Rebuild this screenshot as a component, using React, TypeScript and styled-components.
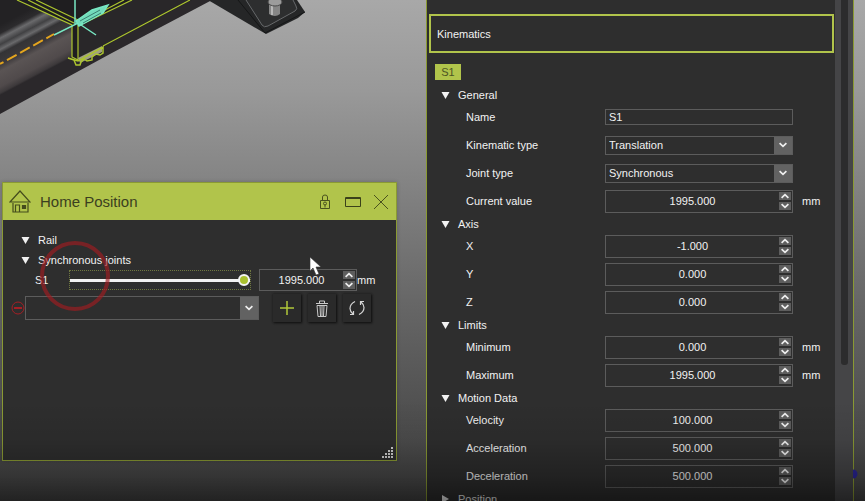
import React from "react";
import styled, { createGlobalStyle, css } from "styled-components";

const lime = "#b1c44b";
const edge = "#8a9a33";
const surface = "#2e2e2e";

const GlobalStyle = createGlobalStyle`
  * { box-sizing: border-box; }
  body { margin: 0; overflow: hidden; background: #222; }
  body, button, input, select { font-family: "Liberation Sans", Arial, sans-serif; font-size: 11px; }
  button, input, select { margin: 0; padding: 0; border: 0; color: inherit; border-radius: 0; }
`;

const Screen = styled.div`
  position: relative;
  display: flex;
  height: 100vh;
  overflow: hidden;
  color: #f2f2f2;
  line-height: 16px;
  background: linear-gradient(#a8a8a8 0%, #999 18%, #858585 35%, #676767 60%, #505050 82%, #454545 100%);
`;

const Shade = styled.div`
  position: absolute;
  inset: auto 0 0 0;
  height: 100px;
  pointer-events: none;
  background: linear-gradient(transparent, rgba(0, 0, 0, 0.08) 40%, rgba(0, 0, 0, 0.27) 75%, rgba(0, 0, 0, 0.5));
`;

const Viewport = styled.main`
  position: relative;
  flex: 1;
  min-width: 0;
`;

const Model = styled.svg`
  display: block;
`;

const Marker = styled.svg`
  position: absolute;
  right: 4px;
  bottom: 22px;
`;

const Floating = styled.section`
  position: absolute;
  left: 2px;
  top: 182px;
  width: 395px;
  min-height: 279px;
  display: flex;
  flex-direction: column;
  background: ${surface};
  border: 1px solid ${edge};
  box-shadow: 0 0 4px rgba(0, 0, 0, 0.2);
`;

const TitleBar = styled.header`
  display: flex;
  align-items: center;
  height: 37px;
  padding: 0 5px 0 6px;
  background: ${lime};
  color: #3b3f20;
`;

const Title = styled.h1`
  flex: 1;
  margin: 0 0 0 9px;
  font-size: 15px;
  line-height: 20px;
  font-weight: 400;
`;

const TitleActions = styled.div`
  display: flex;
  align-items: center;
  gap: 8px;
`;

const IconButton = styled.button`
  display: grid;
  place-items: center;
  width: 20px;
  height: 20px;
  background: none;
`;

const WindowBody = styled.div`
  flex: 1;
  padding: 10px 0 0 14px;
`;

const TreeRow = styled.div<{ $height: number }>`
  display: flex;
  align-items: center;
  height: ${(p) => p.$height}px;
`;

const Toggle = styled.button`
  display: flex;
  align-items: center;
  gap: 8px;
  padding: 0 4px;
  background: none;
`;

const JointRow = styled.div`
  display: flex;
  align-items: center;
  height: 20px;
  padding-left: 18px;
`;

const JointName = styled.label`
  width: 34px;
`;

const Slider = styled.input`
  appearance: none;
  width: 182px;
  height: 20px;
  margin: 0 8px 0 0;
  background: linear-gradient(#f2f2f2, #f2f2f2) center / 100% 3px no-repeat;
  border: 1px dotted #6f7740;
  outline: none;
  &::-webkit-slider-thumb {
    appearance: none;
    width: 12px;
    height: 12px;
    border-radius: 50%;
    border: 2px solid #f4f4f4;
    background: #a9c02f;
  }
`;

const AddRow = styled.div`
  display: flex;
  align-items: center;
  height: 32px;
  margin: 2px 0 0 -6px;
`;

const RemoveButton = styled(IconButton)`
  width: 14px;
  height: 14px;
`;

const Tools = styled.div`
  display: flex;
  gap: 7px;
  margin-left: 14px;
`;

const ToolButton = styled.button`
  display: grid;
  place-items: center;
  width: 28px;
  height: 28px;
  background: #2a2a2a;
  box-shadow: 1px 1px 2px #111, 0 0 2px #1a1a1a;
`;

const Frame = styled.div<{ $width: number; $height: number }>`
  position: relative;
  display: flex;
  align-items: center;
  flex: none;
  width: ${(p) => p.$width}px;
  height: ${(p) => p.$height}px;
  border: 1px solid #5c5c5c;
`;

const fieldText = css`
  flex: 1;
  min-width: 0;
  width: 100%;
  background: none;
  outline: none;
`;

const NumberInput = styled.input`
  ${fieldText}
  text-align: center;
`;

const TextInput = styled.input`
  ${fieldText}
  padding-left: 3px;
`;

const Choice = styled.select`
  ${fieldText}
  appearance: none;
  align-self: stretch;
  padding-left: 3px;
`;

const DropMark = styled.span`
  display: grid;
  place-items: center;
  align-self: stretch;
  width: 18px;
  background: #626262;
  pointer-events: none;
`;

const Steppers = styled.div`
  display: grid;
  gap: 2px;
  margin-right: 1px;
`;

const Step = styled.button`
  display: grid;
  place-items: center;
  width: 12px;
  height: 8px;
  background: #5e5e5e;
`;

const Unit = styled.span<{ $gap: number }>`
  margin-left: ${(p) => p.$gap}px;
`;

const Grip = styled.svg`
  align-self: flex-end;
  margin: 0 3px 2px 0;
`;

const Inspector = styled.aside`
  display: flex;
  width: 428px;
  height: 100%;
  margin-right: 11px;
  background: ${surface};
  border: solid ${edge};
  border-width: 0 1px;
`;

const InspectorBody = styled.div`
  flex: 1;
  min-width: 0;
  overflow: hidden;
  padding: 14px 1px 0 2px;
`;

const Scroll = styled.div`
  width: 18px;
  padding: 0 5px 0 6px;
  background: #454547;
`;

const Thumb = styled.div`
  width: 7px;
  height: 365px;
  background: #2c2c2d;
  border-radius: 0 0 3px 3px;
`;

const SectionTitle = styled.h2`
  display: flex;
  align-items: center;
  height: 39px;
  margin: 0;
  padding-left: 6px;
  border: 2px solid ${lime};
  font-size: 11px;
  font-weight: 400;
`;

const Tag = styled.button`
  display: block;
  width: 26px;
  height: 16px;
  margin: 11px 0 6px 6px;
  background: ${lime};
  color: #4d5524;
`;

const Group = styled.section`
  padding-left: 8px;
`;

const FieldRow = styled.div`
  display: flex;
  align-items: center;
  height: 28px;
  padding-left: 29px;
`;

const FieldLabel = styled.label`
  width: 139px;
`;

const Caret = ({ open = true }: { open?: boolean }) => (
  <svg width="9" height="8" viewBox="0 0 9 8" fill="#f2f2f2" aria-hidden="true">
    <path d={open ? "M.5 1h8L4.500 8z" : "M1 0v8l7-4z"} />
  </svg>
);

const Chevron = ({ up = false }: { up?: boolean }) => (
  <svg width="8" height="6" viewBox="0 0 8 6" fill="none" stroke="#efefef" strokeWidth="1.7" aria-hidden="true">
    <path d={up ? "M.6 4.800 4 1.600l3.400 3.200" : "M.6 1.200 4 4.400l3.400-3.200"} />
  </svg>
);

function NumberField({ id, value, width = 188, height = 23 }: { id: string; value: string; width?: number; height?: number }) {
  return (
    <Frame $width={width} $height={height}>
      <NumberInput id={id} aria-label={id} defaultValue={value} inputMode="decimal" />
      <Steppers>
        <Step aria-label="Increase"><Chevron up /></Step>
        <Step aria-label="Decrease"><Chevron /></Step>
      </Steppers>
    </Frame>
  );
}

function SelectField({ id, value, width, height, label }: { id: string; value: string; width: number; height: number; label?: string }) {
  return (
    <Frame $width={width} $height={height}>
      <Choice id={id} aria-label={label} defaultValue={value}>
        <option>{value}</option>
      </Choice>
      <DropMark><Chevron /></DropMark>
    </Frame>
  );
}

type Field = { label: string; value: string; kind?: "text" | "select"; unit?: string };

const groups: { name: string; fields: Field[] }[] = [
  {
    name: "General",
    fields: [
      { label: "Name", value: "S1", kind: "text" },
      { label: "Kinematic type", value: "Translation", kind: "select" },
      { label: "Joint type", value: "Synchronous", kind: "select" },
      { label: "Current value", value: "1995.000", unit: "mm" },
    ],
  },
  {
    name: "Axis",
    fields: [
      { label: "X", value: "-1.000" },
      { label: "Y", value: "0.000" },
      { label: "Z", value: "0.000" },
    ],
  },
  {
    name: "Limits",
    fields: [
      { label: "Minimum", value: "0.000", unit: "mm" },
      { label: "Maximum", value: "1995.000", unit: "mm" },
    ],
  },
  {
    name: "Motion Data",
    fields: [
      { label: "Velocity", value: "100.000" },
      { label: "Acceleration", value: "500.000" },
      { label: "Deceleration", value: "500.000" },
    ],
  },
  { name: "Position", fields: [] },
];

function PropertyRow({ field }: { field: Field }) {
  const id = field.label.toLowerCase().replace(" ", "-");
  return (
    <FieldRow>
      <FieldLabel htmlFor={id}>{field.label}</FieldLabel>
      {field.kind === "text" ? (
        <Frame $width={188} $height={16}><TextInput id={id} defaultValue={field.value} /></Frame>
      ) : field.kind === "select" ? (
        <SelectField id={id} value={field.value} width={188} height={19} />
      ) : (
        <NumberField id={id} value={field.value} />
      )}
      {field.unit && <Unit $gap={9}>{field.unit}</Unit>}
    </FieldRow>
  );
}

const Scene = () => (
  <Model width="320" height="120" viewBox="0 0 320 120" role="img" aria-label="Rail model">
    <defs>
      <linearGradient id="rail" gradientUnits="userSpaceOnUse" x1="0" y1="25" x2="29" y2="80">
        <stop offset="0" stopColor="#232224" />
        <stop offset="0.12" stopColor="#2c2b2d" />
        <stop offset="0.19" stopColor="#6a6a6c" />
        <stop offset="0.23" stopColor="#58585a" />
        <stop offset="0.28" stopColor="#414143" />
        <stop offset="0.35" stopColor="#69696b" />
        <stop offset="0.41" stopColor="#343335" />
        <stop offset="0.56" stopColor="#3c393b" />
        <stop offset="0.66" stopColor="#5a5454" />
        <stop offset="0.88" stopColor="#504a4b" />
        <stop offset="0.97" stopColor="#3d393b" />
        <stop offset="1" stopColor="#2b282b" />
      </linearGradient>
    </defs>
    <path d="M0 0H212L110 54 0 114z" fill="#2b282b" />
    <path d="M0 0H35L73 24V57L0 96z" fill="url(#rail)" />
    <path d="M18 0H192L78 60 72 56V25z" fill="#1f1e20" />
    <path d="M78 27 130 0H190L78 59z" fill="#292729" />
    <g fill="none" stroke="#adc52f" strokeWidth="1.2">
      <path d="M17 0 72 25V57l6 3V25M36 0l42 20M28 0l46 23M78 26 132 0M80 23 124 0M103 46 190 0" />
    </g>
    <path d="M78 58 102 46v6L80 63z" fill="#a2a282" />
    <path d="M68 58l10 3 25-14v6l-3 2-4-1-4 3v3l-5 1-3-2-3 3-1 3h-4l-2-5-6-2" fill="none" stroke="#adc52f" strokeWidth="1.500" />
    <path d="M0 64 54 34" stroke="#e4a51e" strokeWidth="2" strokeDasharray="11 4" strokeDashoffset="7" />
    <g stroke="#78e8c3" strokeWidth="1.500" fill="none">
      <path d="M75 0v25M54 35l24-12 18 12" />
      <path d="M76 21 92 10l16-5-5 8-24 13z" fill="#73dcbb" />
      <path d="m80 21 20-11m-17 13 18-10" stroke="#397f70" strokeWidth="1" />
    </g>
    <path d="M208 0H297l8 12-7 6-32 16z" fill="#252627" />
    <path d="M246 0 262 25q2 3 6 1l27-15q3-2 1-5l-3-6" fill="#2d2e2f" stroke="#67696b" />
    <path d="M238 0 265 33l40-21" fill="none" stroke="#151617" />
    <path d="M269 0h11v14q-5 4-11 0z" fill="#868686" />
    <path d="M272 2v13" stroke="#b8b8b8" strokeWidth="2" />
    <ellipse cx="275" cy="2" rx="7" ry="4" fill="#9c9c9c" stroke="#4b4b4b" />
  </Model>
);

const HomeIcon = () => (
  <svg width="22" height="24" viewBox="0 0 22 24" fill="none" stroke="#454c1d" strokeWidth="1.2" aria-hidden="true">
    <path d="M1 12 11 1l10 11zM4 13v9h15v-9M6.500 22v-7h4v7M13.500 15.500h3v3h-3z" />
    <path d="M14.500 16.500h1v1h-1z" />
  </svg>
);

const TouchRing = styled.svg`
  position: absolute;
  left: 35px;
  top: 56px;
  pointer-events: none;
`;

const Pointer = styled.svg`
  position: absolute;
  left: 306px;
  top: 73px;
  pointer-events: none;
`;

export default function App() {
  return (
    <>
      <GlobalStyle />
      <Screen>
        <Marker width="8" height="10" viewBox="0 0 8 10" fill="#2a2596" aria-hidden="true">
          <circle cx="0" cy="5" r="4.500" />
        </Marker>
        <Viewport>
          <Scene />
          <Floating aria-label="Home Position">
            <TitleBar>
              <HomeIcon />
              <Title>Home Position</Title>
              <TitleActions>
                <IconButton aria-label="Lock">
                  <svg width="12" height="16" viewBox="0 0 12 16" fill="none" stroke="#4a521e">
                    <path d="M1.500 6.500h9v8h-9zM3.500 6V3q0-2 2.500-2t2.500 2v3M6 10.500v3" />
                    <circle cx="6" cy="9.500" r="1.500" />
                  </svg>
                </IconButton>
                <IconButton aria-label="Maximize">
                  <svg width="16" height="10" viewBox="0 0 16 10" fill="none" stroke="#3b421a">
                    <path d="M.5.5h15v9H.5zM0 1.500h16" />
                  </svg>
                </IconButton>
                <IconButton aria-label="Close">
                  <svg width="16" height="16" viewBox="0 0 16 16" fill="none" stroke="#4a521e">
                    <path d="m1 1 14 14M15 1 1 15" />
                  </svg>
                </IconButton>
              </TitleActions>
            </TitleBar>
            <WindowBody>
              <TreeRow $height={20}><Toggle><Caret />Rail</Toggle></TreeRow>
              <TreeRow $height={20}><Toggle><Caret />Synchronous joints</Toggle></TreeRow>
              <JointRow>
                <JointName htmlFor="s1-slider">S1</JointName>
                <Slider id="s1-slider" type="range" min={0} max={1995} defaultValue={1995} />
                <NumberField id="s1-value" value="1995.000" width={98} height={22} />
                <Unit $gap={0}>mm</Unit>
              </JointRow>
              <AddRow>
                <RemoveButton aria-label="Remove">
                  <svg width="14" height="14" viewBox="0 0 14 14" fill="none" stroke="#a51f25">
                    <circle cx="7" cy="7" r="6" />
                    <path d="M3 7h8" strokeWidth="2" />
                  </svg>
                </RemoveButton>
                <SelectField id="position" label="Saved position" value="" width={234} height={24} />
                <Tools>
                  <ToolButton aria-label="Add">
                    <svg width="16" height="16" viewBox="0 0 16 16" stroke="#b1c83a" strokeWidth="1.500"><path d="M8 1v14M1 8h14" /></svg>
                  </ToolButton>
                  <ToolButton aria-label="Delete">
                    <svg width="14" height="17" viewBox="0 0 14 17" fill="none" stroke="#c9c9c9">
                      <path d="M1 3.500h12M4.500 3V1h5v2M2 5.500h10l-1 11H3zM5 6l.5 10M7 6v10M9 6l-.5 10" />
                    </svg>
                  </ToolButton>
                  <ToolButton aria-label="Refresh">
                    <svg width="18" height="16" viewBox="0 0 18 16" fill="none" stroke="#d6d6d6" strokeWidth="1.200">
                      <path d="M7 1.500Q2 4 2 8.500q0 3 3 5.500M2 14.500h3.500V11M11 14.500q5-2.500 5-7 0-3-3-5.500M16 1.500h-3.500V5" />
                    </svg>
                  </ToolButton>
                </Tools>
              </AddRow>
            </WindowBody>
            <Grip width="11" height="11" viewBox="0 0 11 11" fill="#d0d0d0" aria-hidden="true">
              <path d="M9 0h2v2H9zM6 3h2v2H6zM9 3h2v2H9zM3 6h2v2H3zM6 6h2v2H6zM9 6h2v2H9zM0 9h2v2H0zM3 9h2v2H3zM6 9h2v2H6zM9 9h2v2H9z" />
            </Grip>
            <TouchRing width="74" height="74" viewBox="0 0 74 74" fill="none" aria-hidden="true">
              <circle cx="37" cy="37" r="33" stroke="#a01c20" strokeOpacity="0.65" strokeWidth="4" />
            </TouchRing>
            <Pointer width="13" height="20" viewBox="0 0 13 20" aria-hidden="true">
              <path d="M1 1v14l3-3 3 7 3-1-3-7h5z" fill="#fff" stroke="#333" strokeWidth=".6" />
            </Pointer>
          </Floating>
        </Viewport>
        <Inspector aria-label="Kinematics">
          <InspectorBody>
            <SectionTitle>Kinematics</SectionTitle>
            <Tag>S1</Tag>
            {groups.map((group) => (
              <Group key={group.name}>
                <TreeRow $height={17}>
                  <Toggle><Caret open={group.fields.length > 0} />{group.name}</Toggle>
                </TreeRow>
                {group.fields.map((field) => <PropertyRow key={field.label} field={field} />)}
              </Group>
            ))}
          </InspectorBody>
          <Scroll><Thumb /></Scroll>
        </Inspector>
        <Shade />
      </Screen>
    </>
  );
}
